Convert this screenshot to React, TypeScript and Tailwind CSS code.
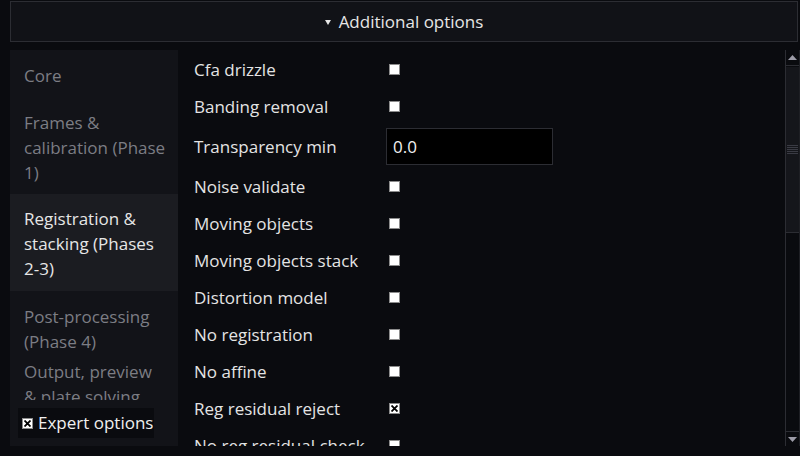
const sections = [
  { lines: ['Core'], cls: 'pt-[13px] pb-[9px]' },
  { lines: ['Frames &', 'calibration (Phase', '1)'], cls: 'pt-[13px] pb-[9px]' },
  { lines: ['Registration &', 'stacking (Phases', '2-3)'], cls: 'pt-[12px] pb-[10px]', active: true },
  { lines: ['Post-processing', '(Phase 4)'], cls: 'pt-[13px] pb-[2px]' },
  { lines: ['Output, preview', '& plate solving'], cls: 'pt-[3px] pb-[10px]' },
];

type Row = { label: string; kind: 'check' | 'input'; checked?: boolean; value?: string };

const rows: Row[] = [
  { label: 'Cfa drizzle', kind: 'check' },
  { label: 'Banding removal', kind: 'check' },
  { label: 'Transparency min', kind: 'input', value: '0.0' },
  { label: 'Noise validate', kind: 'check' },
  { label: 'Moving objects', kind: 'check' },
  { label: 'Moving objects stack', kind: 'check' },
  { label: 'Distortion model', kind: 'check' },
  { label: 'No registration', kind: 'check' },
  { label: 'No affine', kind: 'check' },
  { label: 'Reg residual reject', kind: 'check', checked: true },
  { label: 'No reg residual check', kind: 'check' },
];

function Box({ checked }: { checked?: boolean }) {
  return (
    <span className="w-[11px] h-[11px] shrink-0 bg-white border border-[#8c8c8c] flex items-center justify-center">
      {checked && (
        <svg width="7" height="7" viewBox="0 0 7 7">
          <path d="M0.5 0.5 L6.5 6.5 M6.5 0.5 L0.5 6.5" stroke="#000" strokeWidth="1.8" />
        </svg>
      )}
    </span>
  );
}

function Scrollbar() {
  return (
    <div className="w-[15px] flex flex-col border-l border-[#2c2d33] border-r border-r-[#1e1f24]">
      <div className="h-[16px] border-b border-[#2c2d33] flex items-center justify-center">
        <svg width="9" height="5" viewBox="0 0 9 5">
          <path d="M4.5 0 L9 5 L0 5 Z" fill="#9d9ca8" />
        </svg>
      </div>
      <div className="h-[166px] bg-[#15161b] border-b border-[#2c2d33] flex flex-col items-center justify-center gap-[1px] mt-[1px]">
        {[0, 1, 2, 3, 4].map((i) => (
          <div key={i} className="w-[11px] h-[1px] bg-[#3a3b44]" />
        ))}
      </div>
      <div className="flex-1" />
      <div className="h-[15px] border-t border-[#2c2d33] flex items-center justify-center">
        <svg width="9" height="5" viewBox="0 0 9 5">
          <path d="M0 0 L9 0 L4.5 5 Z" fill="#9d9ca8" />
        </svg>
      </div>
    </div>
  );
}

export default function App() {
  return (
    <div className="w-[800px] h-[456px] bg-[#0a0b0f] flex flex-col font-['Open_Sans',sans-serif] overflow-hidden">
      <div className="mt-[1px] ml-[10px] mr-[2px] h-[41px] bg-[#111217] border border-[#2c2d33] flex items-center justify-center gap-[8px] text-[#e6e6e6] text-[17px]">
        <svg width="6" height="5" viewBox="0 0 6 5" className="mt-[2px]">
          <path d="M0 0 L6 0 L3 5 Z" fill="#e6e6e6" />
        </svg>
        <span>Additional options</span>
      </div>

      <div className="mt-[8px] ml-[10px] h-[396px] flex">
        <div className="w-[168px] bg-[#121318] flex flex-col">
          <div className="h-[350px] overflow-hidden">
            {sections.map((s) => (
              <div
                key={s.lines[0]}
                className={`pl-[14px] text-[17px] leading-[25px] whitespace-nowrap ${s.cls} ${
                  s.active ? 'bg-[#1b1c21] text-[#e6e6e6]' : 'text-[#7c7d84]'
                }`}
              >
                {s.lines.map((l) => (
                  <div key={l}>{l}</div>
                ))}
              </div>
            ))}
          </div>
          <div className="mt-[8px] ml-[8px] w-[136px] h-[30px] bg-[#0a0b0f] flex items-center gap-[5px] pl-[4px] text-[17px] text-[#f0f0f0]">
            <Box checked />
            <span className="whitespace-nowrap">Expert options</span>
          </div>
        </div>

        <div className="flex-1 pl-[16px] pt-[1px] overflow-hidden">
          {rows.map((r) =>
            r.kind === 'input' ? (
              <div key={r.label} className="h-[43px] flex items-center text-[17px] text-[#e4e4e4]">
                <span className="w-[192px]">{r.label}</span>
                <div className="w-[167px] h-[37px] bg-black border border-[#2c2d33] flex items-center px-[6px] text-[#f0f0f0]">
                  {r.value}
                </div>
              </div>
            ) : (
              <div key={r.label} className="h-[37px] flex items-center text-[17px] text-[#e4e4e4]">
                <span className="w-[195px] whitespace-nowrap">{r.label}</span>
                <Box checked={r.checked} />
              </div>
            ),
          )}
        </div>

        <Scrollbar />
      </div>
    </div>
  );
}
